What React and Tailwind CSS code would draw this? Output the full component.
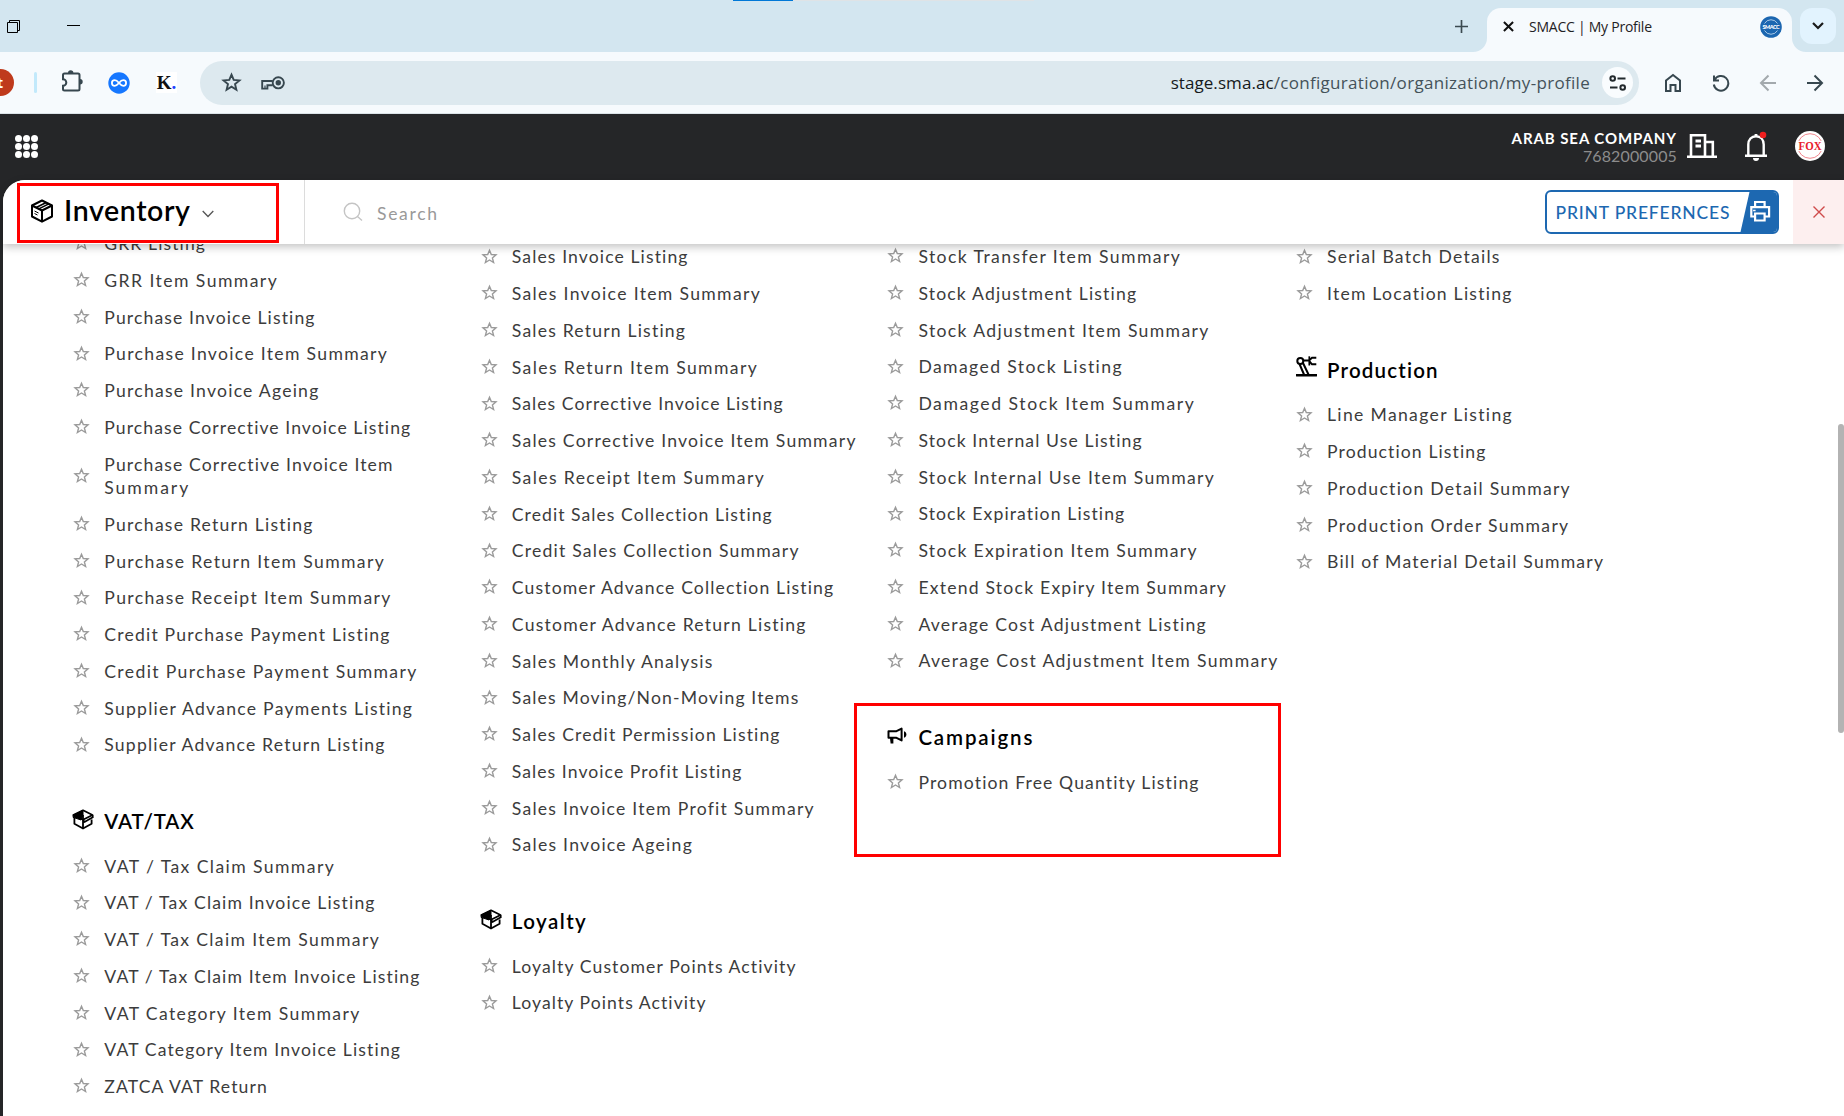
import { useLayoutEffect, useRef, useState } from "react";

/* Single-line text whose tracking is adjusted so that it spans `w` pixels. */
function Fit({ w, children, className = "" }) {
  const ref = useRef(null);
  const [spacing, setSpacing] = useState(0);
  useLayoutEffect(() => {
    const natural = ref.current.getBoundingClientRect().width;
    setSpacing((w - natural) / Math.max(1, children.length - 1));
  }, []);
  return (
    <span ref={ref} className={`inline-block whitespace-nowrap ${className}`} style={{ letterSpacing: spacing }}>
      {children}
    </span>
  );
}

const COLUMNS = [
  {
    offset: "-mt-[18.5px] w-[407.5px]",
    sections: [
      {
        items: [
          ["GRR Listing", 101], ["GRR Item Summary", 172.5], ["Purchase Invoice Listing", 210.5],
          ["Purchase Invoice Item Summary", 282.5], ["Purchase Invoice Ageing", 214],
          ["Purchase Corrective Invoice Listing", 306.5],
          ["Purchase Corrective Invoice Item", 288.5, "Summary", 84],
          ["Purchase Return Listing", 208.5], ["Purchase Return Item Summary", 279.5],
          ["Purchase Receipt Item Summary", 286], ["Credit Purchase Payment Listing", 285.5],
          ["Credit Purchase Payment Summary", 312], ["Supplier Advance Payments Listing", 308],
          ["Supplier Advance Return Listing", 280.5],
        ],
      },
      {
        title: "VAT/TAX", width: 89.5, icon: "box",
        items: [
          ["VAT / Tax Claim Summary", 229.5], ["VAT / Tax Claim Invoice Listing", 270.5],
          ["VAT / Tax Claim Item Summary", 274.5], ["VAT / Tax Claim Item Invoice Listing", 315.5],
          ["VAT Category Item Summary", 255], ["VAT Category Item Invoice Listing", 296],
          ["ZATCA VAT Return", 162.5],
        ],
      },
    ],
  },
  {
    offset: "-mt-[5.2px] w-[406.6px]",
    sections: [
      {
        items: [
          ["Sales Invoice Listing", 176], ["Sales Invoice Item Summary", 248], ["Sales Return Listing", 173.5],
          ["Sales Return Item Summary", 245], ["Sales Corrective Invoice Listing", 271.5],
          ["Sales Corrective Invoice Item Summary", 344], ["Sales Receipt Item Summary", 252],
          ["Credit Sales Collection Listing", 260.5], ["Credit Sales Collection Summary", 287],
          ["Customer Advance Collection Listing", 322], ["Customer Advance Return Listing", 294],
          ["Sales Monthly Analysis", 200.5], ["Sales Moving/Non-Moving Items", 286.5],
          ["Sales Credit Permission Listing", 268], ["Sales Invoice Profit Listing", 229.5],
          ["Sales Invoice Item Profit Summary", 301.5], ["Sales Invoice Ageing", 180],
        ],
      },
      {
        title: "Loyalty", width: 74, icon: "box",
        items: [["Loyalty Customer Points Activity", 284], ["Loyalty Points Activity", 194]],
      },
    ],
  },
  {
    offset: "-mt-[5.4px] w-[408.6px]",
    sections: [
      {
        items: [
          ["Stock Transfer Item Summary", 261.5], ["Stock Adjustment Listing", 218],
          ["Stock Adjustment Item Summary", 290], ["Damaged Stock Listing", 203.5],
          ["Damaged Stock Item Summary", 275.5], ["Stock Internal Use Listing", 223.5],
          ["Stock Internal Use Item Summary", 295.5], ["Stock Expiration Listing", 206.5],
          ["Stock Expiration Item Summary", 278.5], ["Extend Stock Expiry Item Summary", 307.5],
          ["Average Cost Adjustment Listing", 287.5], ["Average Cost Adjustment Item Summary", 359],
        ],
      },
      { title: "Campaigns", width: 114, icon: "horn", items: [["Promotion Free Quantity Listing", 281]] },
    ],
  },
  {
    offset: "-mt-[5.2px] w-[407px]",
    sections: [
      { items: [["Serial Batch Details", 172.5], ["Item Location Listing", 185]] },
      {
        title: "Production", width: 111, icon: "robot",
        items: [
          ["Line Manager Listing", 185], ["Production Listing", 159], ["Production Detail Summary", 243],
          ["Production Order Summary", 241.5], ["Bill of Material Detail Summary", 276],
        ],
      },
    ],
  },
];

function SectionIcon({ kind }) {
  if (kind === "robot")
    return (
      <svg viewBox="0 0 21 21" className="-mt-[3px] size-[21px]" fill="none" stroke="currentColor" strokeWidth="2">
        <circle cx="4.300" cy="5" r="3" />
        <path d="M7 4.500H13M3.500 8L8 18.500M7 7L12.500 18.500" />
        <path d="M13.300 .3V9.500" strokeWidth="1.700" />
        <path d="M13.500 4L16 1.800H20.300M13.500 5.500L16 8.300H20.300" />
        <path d="M.8 19.200H20.200" strokeWidth="2.600" strokeLinecap="round" />
      </svg>
    );
  if (kind === "horn")
    return (
      <svg viewBox="0 0 20 17" className="h-[17px] w-5" fill="none" stroke="currentColor" strokeWidth="2">
        <path d="M1.500 4.200H9.500L14.600 1.600V13.400L9.500 10.800H1.500Z" strokeLinejoin="round" />
        <path d="M3 11H6.400V16.400H3.600Z" fill="currentColor" stroke="none" />
        <path d="M17 4.300c1.600.5 2.400 1.700 2.400 3.200s-.8 2.700-2.400 3.200z" fill="currentColor" stroke="none" />
      </svg>
    );
  return (
    <svg viewBox="0 0 22 21" className="-mt-[1px] -ml-[1px] h-[21px] w-[22px]" fill="none" stroke="currentColor" strokeWidth="1.800" strokeLinejoin="round">
      <path d="M2.400 8.500V14.800L11 19.500L19.600 14.800V10.500" />
      <path d="M11 1.300L20.500 6L11 10.800L1.300 6Z" />
      <path d="M11 1.300L1.300 6L1 8.300L9 11L11 6Z" fill="currentColor" strokeWidth="1" />
      <path d="M11 6V19.500M20.500 6L20.800 8.300L12.500 13L11 10.800" />
    </svg>
  );
}

function Star() {
  return (
    <svg viewBox="0 0 19 19" className="-mt-[2px] mr-[13.3px] size-[19px] shrink-0" fill="none" stroke="#9b9b9b" strokeWidth="1.400">
      <path d="M9.500 3.200L11.300 7.500L16 7.900L12.400 10.900L13.600 15.500L9.500 13L5.400 15.500L6.600 10.900L3 7.900L7.700 7.500Z" />
    </svg>
  );
}

function Item({ data }) {
  const [text, w, text2, w2] = data;
  return (
    <li className="flex items-center py-[6.635px]">
      <Star />
      <span className="flex flex-col items-start text-[17.600px] leading-[23.500px] text-[#3c3c3c]">
        <Fit w={w}>{text}</Fit>
        {text2 && <Fit w={w2}>{text2}</Fit>}
      </span>
    </li>
  );
}

function Column({ column }) {
  return (
    <div className={`shrink-0 ${column.offset}`}>
      {column.sections.map((s, i) => (
        <section key={i}>
          {s.title && (
            <h2 className="flex h-[84.500px] pt-[45.500px] text-[20.500px] leading-6 font-semibold text-black">
              <span className="flex h-[21px] w-[32.300px] items-center pl-[1px]"><SectionIcon kind={s.icon} /></span>
              <Fit w={s.width}>{s.title}</Fit>
            </h2>
          )}
          <ul>{s.items.map((it) => <Item key={it[0]} data={it} />)}</ul>
        </section>
      ))}
    </div>
  );
}

function TabStrip() {
  return (
    <div className="relative flex h-[52px] shrink-0 items-start bg-[#d3e6f0]">
      <div className="absolute top-0 left-[733px] flex h-px w-[301px] bg-[#dfe3e6]"><div className="w-[60px] bg-[#0078d7]" /></div>
      <svg viewBox="0 0 13 13" className="mt-5 ml-[7px] size-[13px]" fill="none" stroke="#000">
        <path d="M.5 2.500H10.500V12.500H.5ZM2.500 2.500V.5H12.500V10.500H10.500" />
      </svg>
      <div className="mt-[25px] ml-[47px] h-px w-[13px] bg-black" />
      <div className="flex-1" />
      <svg viewBox="0 0 14 14" className="mt-[20px] mr-[19px] size-[13px]" stroke="#3b4a50" strokeWidth="1.800"><path d="M7 0V14M0 7H14" /></svg>
      <div className="relative flex h-11 w-[305px] self-end rounded-t-[14px] bg-[#f6fafd]">
        <svg viewBox="0 0 14 14" className="absolute bottom-0 -left-[14px] size-[14px]" fill="#f6fafd"><path d="M14 0V14H0A14 14 0 0 0 14 0" /></svg>
        <svg viewBox="0 0 14 14" className="absolute -right-[14px] bottom-0 size-[14px]" fill="#f6fafd"><path d="M0 0V14H14A14 14 0 0 1 0 0" /></svg>
        <svg viewBox="0 0 12 12" className="mt-[13px] ml-[16px] size-[11px]" stroke="#111" strokeWidth="2.200"><path d="M1 1L11 11M11 1L1 11" /></svg>
        <Fit w={123} className="mt-[9px] ml-[15px] font-['Open_Sans'] text-[14px] leading-[20px] text-[#1f2224]">SMACC | My Profile</Fit>
        <div className="flex-1" />
        <svg viewBox="0 0 22 22" className="mt-[8px] mr-[10px] size-[22px]">
          <circle cx="11" cy="11" r="10.800" fill="#1b66b0" />
          <path d="M4.500 7.500A7.500 7.500 0 0 1 17.500 7.500M4.500 14.500A7.500 7.500 0 0 0 17.500 14.500" fill="none" stroke="#a9c8e6" />
          <text x="11" y="13" textAnchor="middle" textLength="17" fontSize="5.500" fontWeight="900" fill="#fff" fontFamily="Lato">SMACC</text>
        </svg>
      </div>
      <div className="mt-2 mr-2 ml-2 flex size-9 items-center justify-center rounded-xl bg-[#e2f3fe]">
        <svg viewBox="0 0 12 8" className="h-[8px] w-3" fill="none" stroke="#1a1a1a" strokeWidth="2.200"><path d="M1 1L6 6L11 1" /></svg>
      </div>
    </div>
  );
}

function Toolbar() {
  return (
    <div className="flex h-[62px] shrink-0 items-center border-b border-[#dbe3e8] bg-[#f6fafd]">
      <div className="flex h-[27px] w-[14px] items-center justify-start overflow-hidden rounded-r-full bg-[#bf3a1c] pb-px font-['Open_Sans'] text-[14px] font-bold text-white"><span className="-ml-[3px]">t</span></div>
      <div className="ml-5 h-[21px] w-[3px] rounded bg-[#c2e9fb]" />
      <svg viewBox="0 0 22 22" className="-mt-[4px] ml-6 size-[22px]" fill="none" stroke="#37474f" strokeWidth="2">
        <path d="M3.500 3.500H17a1.500 1.500 0 0 1 1.500 1.500V19a1.500 1.500 0 0 1-1.500 1.500H3.500A1.500 1.500 0 0 1 2 19V15.800a3.300 3.300 0 0 0 0-6.600V5A1.500 1.500 0 0 1 3.500 3.500Z" />
        <path d="M7 3a2.700 2.700 0 0 1 5.400 0ZM19 9a2.700 2.700 0 0 1 0 5.400Z" fill="#37474f" stroke="none" />
      </svg>
      <svg viewBox="0 0 22 22" className="ml-[25px] size-[22px]">
        <circle cx="11" cy="11" r="10.700" fill="#1677ff" />
        <path d="M11 11C9 8.600 8 8.200 6.700 8.200a2.800 2.800 0 0 0 0 5.600C8 13.800 9 13.400 11 11S14 8.200 15.300 8.200a2.800 2.800 0 0 1 0 5.600C14 13.800 13 13.400 11 11Z" fill="none" stroke="#fff" strokeWidth="1.800" />
      </svg>
      <div className="ml-[26px] flex size-[21px] items-center justify-center bg-white font-['Liberation_Serif'] text-[19px] leading-none font-bold text-[#111]">K<span className="text-[#1c3fff]">.</span></div>
      <div className="ml-[23px] flex h-11 w-[1439px] items-center rounded-full bg-[#dde9ef] pr-[6px] pl-[20px]">
        <svg viewBox="0 0 24 24" className="size-[23px]" fill="none" stroke="#37474f" strokeWidth="2"><path d="M12 3.800L14.300 9.300L20.300 9.800L15.700 13.700L17.100 19.600L12 16.400L6.900 19.600L8.300 13.700L3.700 9.800L9.700 9.300Z" /></svg>
        <svg viewBox="0 0 24 14" className="ml-[18px] h-[14px] w-6" fill="none" stroke="#37474f" strokeWidth="1.900">
          <path d="M11.800 5H1.200V12.600H6.400V9.300H11.800" /><path d="M4 9.500V12" strokeWidth="1.200" />
          <circle cx="17.300" cy="6.800" r="5.600" /><circle cx="17.300" cy="6.800" r="2.700" fill="#37474f" stroke="none" />
        </svg>
        <div className="flex-1" />
        <div className="flex font-['Open_Sans'] text-[17px] leading-6 text-[#44525a]">
          <Fit w={103} className="text-[#15191c]">stage.sma.ac</Fit>
          <Fit w={316}>/configuration/organization/my-profile</Fit>
        </div>
        <div className="ml-3 flex size-[31px] items-center justify-center rounded-full bg-[#f9fcfe]">
          <svg viewBox="0 0 18 16" className="h-4 w-[18px]" fill="none" stroke="#22292d" strokeWidth="2">
            <circle cx="3.700" cy="3.500" r="2.300" /><path d="M8.500 3.500H16.500M1 12.500H8.500" /><circle cx="13.700" cy="12.500" r="2.300" />
          </svg>
        </div>
      </div>
      <svg viewBox="0 0 18 20" className="ml-[25px] h-5 w-[18px]" fill="none" stroke="#37474f" strokeWidth="2"><path d="M2 7.500L9 2L16 7.500V18H11.500V12H6.500V18H2Z" /></svg>
      <svg viewBox="0 0 18 18" className="ml-[30px] size-[18px]" fill="none" stroke="#37474f" strokeWidth="2"><path d="M2 1.500V6.500H7M2.500 6A7.300 7.300 0 1 1 1.800 10.500" /></svg>
      <svg viewBox="0 0 18 18" className="ml-[29px] size-[18px]" fill="none" stroke="#a3a9ad" strokeWidth="2"><path d="M17 9H2.500M9.500 1.500L2 9L9.500 16.500" /></svg>
      <svg viewBox="0 0 18 18" className="ml-[29px] size-[18px]" fill="none" stroke="#37474f" strokeWidth="2"><path d="M1 9H15.500M8.500 1.500L16 9L8.500 16.500" /></svg>
    </div>
  );
}

function AppBar() {
  return (
    <div className="flex h-[66px] shrink-0 items-center bg-[#252628] pb-[2px]">
      <div className="mt-[1px] ml-[15px] grid grid-cols-3 gap-[1px]">
        {Array.from({ length: 9 }, (_, i) => <span key={i} className="size-[7px] rounded-full bg-white" />)}
      </div>
      <div className="flex-1" />
      <div className="mt-[1px] flex flex-col items-end leading-[18px]">
        <Fit w={164.5} className="-mr-[1px] text-[15px] font-bold text-white">ARAB SEA COMPANY</Fit>
        <Fit w={94} className="-mr-[1px] text-[16px] text-[#8c8c8c]">7682000005</Fit>
      </div>
      <svg viewBox="0 0 30 26" className="-mt-[1px] ml-[11px] h-[26px] w-[30px]" fill="none" stroke="#fff" strokeWidth="2.600">
        <path d="M0 23.800H30M4 23.500V2.200H18V23.500M18 9H25.800V23.500" /><path d="M8.500 8H14M8.500 13H14" strokeWidth="3" />
      </svg>
      <svg viewBox="0 0 24 30" className="ml-[27px] h-[30px] w-6" fill="none" stroke="#fff" strokeWidth="2.400">
        <path d="M1 24.700H23M4.300 24.500V13.500C4.300 8.500 7.500 5.200 12 5.200S19.700 8.500 19.700 13.500V24.500" />
        <path d="M10.600 5V3h2.800v2M9 27h6a3 3 0 0 1-6 0Z" fill="#fff" stroke="none" /><circle cx="19" cy="4" r="3.300" fill="#f01f1f" stroke="none" />
      </svg>
      <svg viewBox="0 0 30 30" className="mr-[19px] ml-[27px] size-[30px]">
        <circle cx="15" cy="15" r="15" fill="#fff" /><circle cx="15" cy="15" r="12.300" fill="none" stroke="#ef6a72" strokeWidth=".8" />
        <rect x="2" y="10" width="26" height="10" fill="#fff" />
        <text x="15" y="19.300" textAnchor="middle" textLength="23" lengthAdjust="spacingAndGlyphs" fontSize="13.500" fontWeight="700" fill="#e8202c" fontFamily="Liberation Serif">FOX</text>
      </svg>
    </div>
  );
}

function MenuHeader() {
  return (
    <header className="relative z-10 flex h-16 shrink-0 items-center rounded-tl-[22px] bg-white shadow-[0_3px_8px_rgba(0,0,0,0.24)]">
      <div className="absolute top-[3px] left-[14px] h-[60px] w-[262px] border-[3px] border-[#ff0000]" />
      <div className="flex h-full w-[302px] items-center border-r border-[#dcdcdc] pl-[27px]">
        <svg viewBox="0 0 24 24" className="-mt-[2px] size-6" fill="none" stroke="#000" strokeWidth="2" strokeLinejoin="round">
          <path d="M12 1.500L22 6.500V17.500L12 22.700L2 17.500V6.500Z" /><path d="M2 6.500L12 11.500L22 6.500M12 11.500V22.500" />
          <path d="M6.200 8.500L16.200 3.500M8.800 9.800L18.800 4.800" strokeWidth="1.500" /><path d="M4.500 12L8.500 14M4.500 14.500L7.500 16" strokeWidth="1" />
        </svg>
        <Fit w={126} className="-mt-1 ml-[10px] text-[28.500px] font-semibold text-black">Inventory</Fit>
        <svg viewBox="0 0 12 8" className="mt-[3px] ml-[11px] h-[8px] w-3" fill="none" stroke="#555" strokeWidth="1.300"><path d="M.7 1L6 6.500L11.300 1" /></svg>
      </div>
      <svg viewBox="0 0 20 20" className="mb-[1px] ml-[38px] size-5" fill="none" stroke="#c4c4c4" strokeWidth="1.400"><circle cx="9" cy="9" r="7.700" /><path d="M14.500 14.500L19 18.500" /></svg>
      <Fit w={60} className="mt-[3px] ml-[14px] text-[17.500px] leading-6 text-[#999]">Search</Fit>
      <div className="flex-1" />
      <div className="mr-[14px] flex h-11 w-[234px] items-center overflow-hidden rounded-md border-2 border-[#1d68b1]">
        <Fit w={174} className="mt-[2px] ml-[8.500px] text-[17.500px] font-medium text-[#1d68b1]">PRINT PREFERNCES</Fit>
        <svg viewBox="0 0 42 40" className="ml-auto h-10 w-[42px] shrink-0" fill="none" stroke="#fff" strokeWidth="2.200">
          <path d="M14.500 0H42V40H5.500Z" fill="#1d68b1" stroke="none" />
          <g transform="translate(2.600 0)"><path d="M17.500 15V10H27V15M17.500 24.500H13.700V15.200H31.500V24.500H27" /><path d="M17.500 21.500H27V28.500H17.500Z" /><path d="M15.500 18.500H18" strokeWidth="1.600" /></g>
        </svg>
      </div>
      <div className="flex h-full w-[51px] items-center justify-center bg-[#fdefef]">
        <svg viewBox="0 0 12 12" className="size-3" stroke="#cf4a4a" strokeWidth="1.400"><path d="M.5 .5L11.500 11.500M11.500 .5L.5 11.500" /></svg>
      </div>
    </header>
  );
}

export default function App() {
  return (
    <div className="flex h-[1116px] w-[1844px] flex-col overflow-hidden bg-[#252628] font-['Lato',sans-serif]">
      <TabStrip />
      <Toolbar />
      <AppBar />
      <div className="ml-[3px] flex min-h-0 flex-1 flex-col rounded-tl-[22px] bg-white">
        <MenuHeader />
        <main className="relative flex min-h-0 flex-1 items-start overflow-hidden pl-[69px]">
          {COLUMNS.map((c, i) => <Column key={i} column={c} />)}
          <div className="absolute top-[459px] left-[851px] h-[154px] w-[427px] border-[3px] border-[#ff0000]" />
          <div className="absolute top-[180px] right-0 h-[309px] w-[6px] rounded-full bg-[#b3b3b3]" />
        </main>
      </div>
    </div>
  );
}
